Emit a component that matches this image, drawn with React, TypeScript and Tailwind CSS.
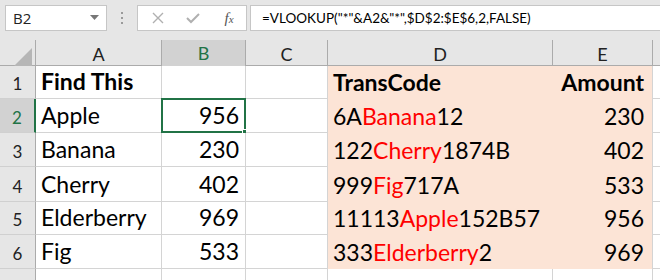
import React from "react";

const cellFont = { fontFamily: "Lato, 'Noto Sans', sans-serif" };

const rowHeights = [33, 34, 34, 35, 33, 34];

type Seg = { t: string; red?: boolean };

const aVals = ["Apple", "Banana", "Cherry", "Elderberry", "Fig"];
const bVals = ["956", "230", "402", "969", "533"];
const dVals: Seg[][] = [
  [{ t: "6A" }, { t: "Banana", red: true }, { t: "12" }],
  [{ t: "122" }, { t: "Cherry", red: true }, { t: "1874B" }],
  [{ t: "999" }, { t: "Fig", red: true }, { t: "717A" }],
  [{ t: "11113" }, { t: "Apple", red: true }, { t: "152B57" }],
  [{ t: "333" }, { t: "Elderberry", red: true }, { t: "2" }],
];
const eVals = ["230", "402", "533", "956", "969"];

function Cell({
  children,
  right,
  peach,
  bold,
  noRight,
  noBottom,
  className = "",
}: {
  children?: React.ReactNode;
  right?: boolean;
  peach?: boolean;
  bold?: boolean;
  noRight?: boolean;
  noBottom?: boolean;
  className?: string;
}) {
  return (
    <div
      className={`relative flex items-end pb-[5px] text-[23px] leading-none text-black whitespace-nowrap ${
        right ? "justify-end pr-[6px]" : "justify-start pl-[5px]"
      } ${peach ? "bg-[#fce4d6]" : "bg-white"} ${bold ? "font-bold" : ""} ${
        noRight ? "" : "border-r border-[#d4d4d4]"
      } ${noBottom ? "" : "border-b border-[#d4d4d4]"} ${className}`}
    >
      {children}
    </div>
  );
}

export default function App() {
  return (
    <div className="w-[660px] h-[280px] overflow-hidden bg-white">
      {/* Formula bar */}
      <div className="h-[40px] bg-[#e6e6e6] flex items-start pt-[5px] pl-[5px]">
        <div className="w-[102px] h-[26px] bg-white border border-[#c6c6c6] flex items-center justify-between pl-[7px] pr-[7px]">
          <span className="text-[15px] text-[#222]" style={{ fontFamily: "'Open Sans', sans-serif" }}>
            B2
          </span>
          <svg width="9" height="6" viewBox="0 0 9 6">
            <polygon points="0,0 9,0 4.5,5" fill="#777" />
          </svg>
        </div>
        <div className="w-[30px] h-[26px] flex flex-col items-center justify-center gap-[3px]">
          <div className="w-[2px] h-[2px] bg-[#9a9a9a]" />
          <div className="w-[2px] h-[2px] bg-[#9a9a9a]" />
          <div className="w-[2px] h-[2px] bg-[#9a9a9a]" />
        </div>
        <div className="w-[110px] h-[26px] bg-white border border-[#c6c6c6] flex items-center">
          <div className="w-[40px] flex justify-center">
            <svg width="12" height="12" viewBox="0 0 12 12">
              <path d="M1 1 L11 11 M11 1 L1 11" stroke="#b0b0b0" strokeWidth="1.4" />
            </svg>
          </div>
          <div className="w-[30px] flex justify-center">
            <svg width="14" height="12" viewBox="0 0 14 12">
              <path d="M1 6 L5 10 L13 2" stroke="#b0b0b0" strokeWidth="2" fill="none" />
            </svg>
          </div>
          <div className="flex-1 flex justify-center pl-[4px]">
            <span
              className="italic text-[15px] text-[#555]"
              style={{ fontFamily: "'Liberation Serif', serif" }}
            >
              f<span className="text-[11px]">x</span>
            </span>
          </div>
        </div>
        <div className="ml-[3px] flex-1 h-[26px] bg-white border-l border-t border-b border-[#c6c6c6] flex items-center pl-[11px]">
          <span className="text-[13.5px] text-black whitespace-nowrap" style={{ fontFamily: "Lato, sans-serif" }}>
            =VLOOKUP("*"&amp;A2&amp;"*",$D$2:$E$6,2,FALSE)
          </span>
        </div>
      </div>

      {/* Column headers */}
      <div
        className="grid grid-cols-[36px_126px_84px_82px_225px_100px_7px] h-[26px] bg-[#e6e6e6] border-b border-[#ababab]"
        style={{ fontFamily: "Lato, 'Noto Sans', sans-serif" }}
      >
        <div className="relative border-r border-[#ababab]">
          <svg className="absolute right-[3px] bottom-[3px]" width="18" height="18" viewBox="0 0 18 18">
            <polygon points="18,0 18,18 0,18" fill="#b6b6b6" />
          </svg>
        </div>
        {["A", "B", "C", "D", "E"].map((c) => (
          <div
            key={c}
            className={`flex items-center justify-center text-[18px] border-r border-[#ababab] ${
              c === "B" ? "bg-[#d2d2d2] text-[#217346] border-b-2 border-b-[#217346]" : "text-[#222]"
            }`}
          >
            {c}
          </div>
        ))}
        <div />
      </div>

      {/* Rows */}
      {rowHeights.map((h, i) => {
        const r = i + 1;
        const sel = r === 2;
        return (
          <div
            key={r}
            className="grid grid-cols-[36px_126px_84px_82px_225px_100px_7px]"
            style={{ height: h, ...cellFont }}
          >
            <div
              className={`flex items-end justify-center pb-[6px] text-[17px] leading-none border-b border-[#d0d0d0] ${
                sel
                  ? "bg-[#d2d2d2] text-[#217346] border-r-2 border-r-[#217346]"
                  : "bg-[#e6e6e6] text-[#222] border-r border-r-[#ababab]"
              }`}
            >
              {r}
            </div>
            {r === 1 ? (
              <>
                <Cell bold>Find This</Cell>
                <Cell />
                <Cell />
                <Cell peach bold noRight noBottom>
                  TransCode
                </Cell>
                <Cell peach bold right noBottom className="pr-[8px]">
                  Amount
                </Cell>
                <Cell noRight />
              </>
            ) : (
              <>
                <Cell>{aVals[i - 1]}</Cell>
                <Cell right>
                  {bVals[i - 1]}
                  {sel && (
                    <div className="absolute left-[-1px] top-[-1px] right-[-1px] bottom-[-1px] border-2 border-[#217346] pointer-events-none">
                      <div className="absolute right-[-5px] bottom-[-5px] w-[7px] h-[7px] bg-[#217346] border border-white" />
                    </div>
                  )}
                </Cell>
                <Cell />
                <Cell peach noRight noBottom>
                  {dVals[i - 1].map((s, k) => (
                    <span key={k} className={s.red ? "text-[#ff0000]" : ""}>
                      {s.t}
                    </span>
                  ))}
                </Cell>
                <Cell peach right noBottom className="pr-[8px]">
                  {eVals[i - 1]}
                </Cell>
                <Cell noRight />
              </>
            )}
          </div>
        );
      })}
      <div className="grid grid-cols-[36px_126px_84px_82px_225px_100px_7px] h-[20px]">
        <div className="bg-[#e6e6e6] border-r border-[#ababab]" />
        <div className="border-r border-[#d4d4d4]" />
        <div className="border-r border-[#d4d4d4]" />
        <div className="border-r border-[#d4d4d4]" />
        <div className="border-r border-[#d4d4d4]" />
        <div className="border-r border-[#d4d4d4]" />
        <div />
      </div>
    </div>
  );
}
